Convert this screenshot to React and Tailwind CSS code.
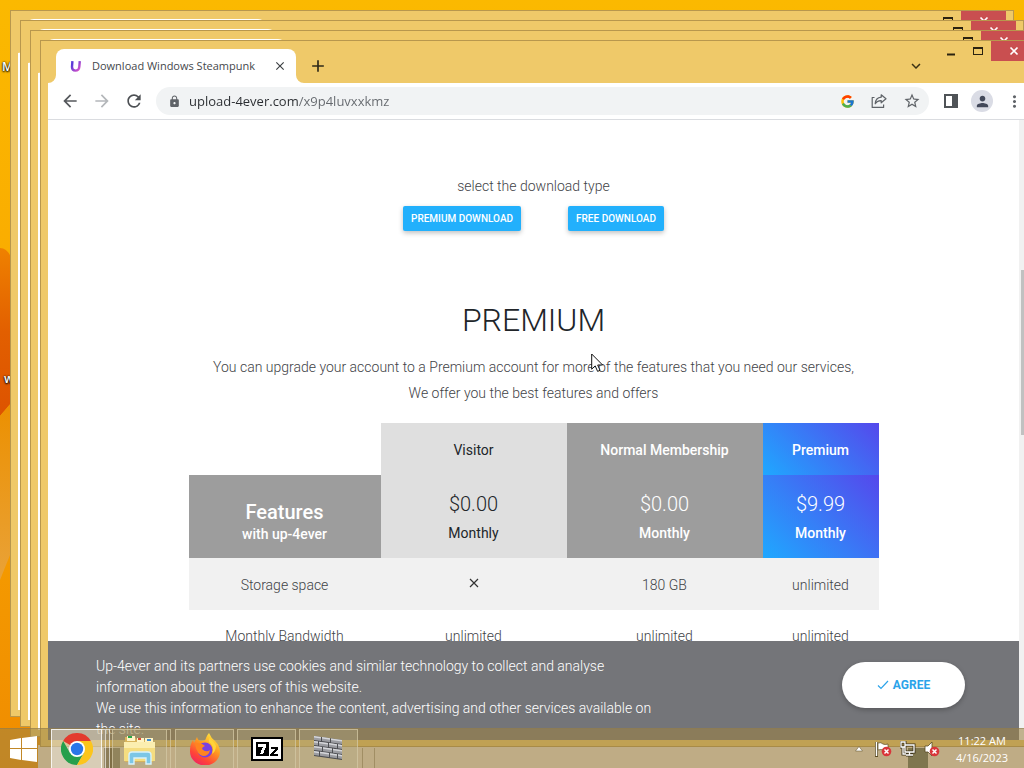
import React from "react";
import { MdArrowBack, MdArrowForward, MdRefresh, MdLock, MdStarBorder, MdPerson, MdClose, MdAdd, MdExpandMore, MdMoreVert } from "react-icons/md";
import { FcGoogle } from "react-icons/fc";

const plans = [
  { name: "Visitor", price: "$0.00", style: "bg-[#dfdfdf] text-[#212529]", weight: "font-normal" },
  { name: "Normal Membership", price: "$0.00", style: "bg-[#9d9d9d] text-white", weight: "font-medium" },
  { name: "Premium", price: "$9.99", style: "bg-linear-[45deg] from-[#1fa8ff] to-[#5548ec] text-white", weight: "font-medium" },
];

function Wallpaper() {
  return (
    <svg className="absolute inset-0 h-full w-full" viewBox="0 0 1024 768" preserveAspectRatio="none" aria-hidden="true">
      <defs>
        <linearGradient id="sky" x1="0" y1="0" x2="0" y2="1">
          <stop offset="0" stopColor="#fbb900" />
          <stop offset="0.33" stopColor="#faad00" />
          <stop offset="1" stopColor="#f08c00" />
        </linearGradient>
        <linearGradient id="petal" x1="0" y1="0" x2="0" y2="1">
          <stop offset="0" stopColor="#ef8100" />
          <stop offset="0.5" stopColor="#e25f00" />
          <stop offset="1" stopColor="#dd5300" />
        </linearGradient>
        <linearGradient id="fold" x1="0" y1="0" x2="0" y2="1">
          <stop offset="0" stopColor="#ec9000" />
          <stop offset="1" stopColor="#e9a238" />
        </linearGradient>
      </defs>
      <rect width="1024" height="768" fill="url(#sky)" />
      <path d="M0 248Q8 248 12 260V402L0 416Z" fill="url(#petal)" />
      <path d="M0 416L12 402V550L0 580Z" fill="url(#fold)" />
      <rect x="38" y="745" width="986" height="23" fill="#ede4dc" />
      <rect x="908" y="748" width="20" height="20" fill="#59665f" />
      <rect x="104" y="748" width="16" height="20" fill="#59564a" />
    </svg>
  );
}

function UploadLogo() {
  return (
    <svg width="16" height="16" viewBox="0 0 16 16" className="shrink-0" aria-hidden="true">
      <defs>
        <linearGradient id="logo" x1="0" y1="0" x2="1" y2="1">
          <stop offset="0.2" stopColor="#5a3bd8" />
          <stop offset="1" stopColor="#e054c8" />
        </linearGradient>
      </defs>
      <path d="M4.4 3.2L4 9Q4 12.6 7.4 12.6Q11 12.6 11.3 9L11.8 3.2" fill="none" stroke="url(#logo)" strokeWidth="2.4" />
    </svg>
  );
}

function ShareIcon() {
  return (
    <svg width="16" height="16" viewBox="0 0 16 16" fill="none" stroke="#5f6368" strokeWidth="1.2" strokeLinejoin="round" aria-hidden="true">
      <path d="M3.5 4.5H1.2V14.4H12.6V11.5" />
      <path d="M10.2 1.8L15 5.8L10.2 9.8V7.6Q6.2 7.4 4.2 10.8Q4.6 4.8 10.2 4.2Z" />
    </svg>
  );
}

function Caption({ front }) {
  return (
    <div className="flex shrink-0 self-start" aria-hidden={!front}>
      <button type="button" tabIndex={front ? 0 : -1} aria-label="Minimize" className="flex h-5 w-7 items-center justify-center">
        <svg width="12" height="12"><path d="M2 8.5H10V10.5H2Z" fill="#2b2310" /></svg>
      </button>
      <button type="button" tabIndex={front ? 0 : -1} aria-label="Maximize" className="flex h-5 w-[26px] items-center justify-center">
        <svg width="12" height="12"><path d="M1 2H11V10H1ZM2 4V9H10V4Z" fill="#2b2310" fillRule="evenodd" /></svg>
      </button>
      <button type="button" tabIndex={front ? 0 : -1} aria-label="Close window" className="flex h-5 w-[45px] items-center justify-center bg-[#c94f50]">
        <svg width="10" height="10"><path d="M1.5 1.5L8.5 8.5M8.5 1.5L1.5 8.5" stroke="#fff" strokeWidth="1.7" /></svg>
      </button>
    </div>
  );
}

function BrowserWindow({ place, front = false, children }) {
  return (
    <div className={`absolute flex flex-col border border-[#b8974d] bg-[#efc969] px-[7px] pb-1.5 ${place}`}>
      <div className="flex h-[42px] shrink-0">
        <div className="relative mt-2 ml-2 flex w-60 items-center rounded-t-lg bg-white pr-2 pl-3">
          <svg width="8" height="8" className="absolute bottom-0 -left-2" aria-hidden="true"><path d="M8 0V8H0A8 8 0 0 0 8 0Z" fill="#fff" /></svg>
          <svg width="8" height="8" className="absolute -right-2 bottom-0" aria-hidden="true"><path d="M0 0V8H8A8 8 0 0 1 0 0Z" fill="#fff" /></svg>
          {front && (
            <>
              <UploadLogo />
              <span className="ml-2 min-w-0 flex-1 text-[11px] whitespace-nowrap text-[#45484c]">Download Windows Steampunk</span>
              <button type="button" aria-label="Close tab" className="ml-1 flex h-4 w-4 items-center justify-center text-[#3c4043]"><MdClose size={14} /></button>
            </>
          )}
        </div>
        {front && (
          <button type="button" aria-label="New tab" className="ml-3 self-center pt-2 text-[#2f2a18]"><MdAdd size={20} /></button>
        )}
        <div className="flex-1" />
        {front && (
          <button type="button" aria-label="Search tabs" className="mr-3 self-center pt-2 text-[#3b3215]"><MdExpandMore size={18} /></button>
        )}
        <Caption front={front} />
      </div>
      <div className="flex min-h-0 flex-1 flex-col bg-white">{children}</div>
    </div>
  );
}

function Toolbar() {
  return (
    <div className="flex h-[37px] shrink-0 items-center border-b border-[#dadce0] pl-3 text-[#5f6368]">
      <button type="button" aria-label="Back" className="text-[#55585c]"><MdArrowBack size={20} /></button>
      <button type="button" aria-label="Forward" className="ml-3 text-[#b4b7ba]"><MdArrowForward size={20} /></button>
      <button type="button" aria-label="Reload" className="ml-3 text-[#4d5054]"><MdRefresh size={20} /></button>
      <div className="ml-3 flex h-7 flex-1 items-center gap-4 rounded-full bg-[#f1f3f4] pr-2 pl-3">
        <MdLock size={13} className="-mr-2 shrink-0" />
        <label htmlFor="address" className="sr-only">Address</label>
        <input
          id="address"
          defaultValue="upload-4ever.com/x9p4luvxxkmz"
          className="h-6 min-w-0 flex-1 bg-linear-to-r from-[#2a2d31] from-[110px] to-[#64686d] to-[110px] bg-clip-text text-[13px] text-transparent caret-black outline-none"
        />
        <FcGoogle size={15} className="shrink-0" />
        <button type="button" aria-label="Share"><ShareIcon /></button>
        <button type="button" aria-label="Bookmark"><MdStarBorder size={18} /></button>
      </div>
      <button type="button" aria-label="Side panel" className="ml-3.5">
        <svg width="16" height="14"><path d="M1 0H15V14H1ZM3 2V12H9V2Z" fill="#4f5357" fillRule="evenodd" /></svg>
      </button>
      <button type="button" aria-label="Profile" className="ml-3 flex h-[22px] w-[22px] items-center justify-center rounded-full bg-[#dadce5] text-[#43495a]"><MdPerson size={17} /></button>
      <button type="button" aria-label="Menu" className="mr-3 ml-3"><MdMoreVert size={19} /></button>
    </div>
  );
}

function PricingTable() {
  return (
    <table className="mx-auto mt-[17px] w-full max-w-[690px] table-fixed border-collapse text-center text-sm">
      <colgroup>
        <col className="w-[192px]" /><col className="w-[186px]" /><col className="w-[196px]" /><col className="w-[116px]" />
      </colgroup>
      <thead>
        <tr className="h-[52px]">
          <td />
          {plans.map((p) => (
            <th key={p.name} scope="col" className={`pt-0.5 ${p.style} ${p.weight}`}>{p.name}</th>
          ))}
        </tr>
        <tr className="h-[83px]">
          <th scope="col" className="bg-[#9d9d9d] pt-2.5 font-medium text-white">
            <div className="text-xl leading-6">Features</div>
            <div className="leading-5">with up-4ever</div>
          </th>
          {plans.map((p) => (
            <td key={p.name} className={`pt-px ${p.style}`}>
              <div className="text-xl leading-7 font-light">{p.price}</div>
              <div className={`mt-[3px] leading-6 ${p.weight}`}>Monthly</div>
            </td>
          ))}
        </tr>
      </thead>
      <tbody className="font-light text-[#3f4347]">
        <tr className="h-[52px] bg-[#f1f1f1]">
          <td className="pt-0.5">Storage space</td>
          <td className="pb-0.5">
            <svg width="10" height="10" className="mx-auto" role="img" aria-label="Not included"><path d="M1 1L9 9M9 1L1 9" stroke="#333" strokeWidth="1.2" /></svg>
          </td>
          <td className="pt-0.5">180 GB</td>
          <td className="pt-0.5">unlimited</td>
        </tr>
        <tr className="h-[52px]">
          <td>Monthly Bandwidth</td><td>unlimited</td><td>unlimited</td><td>unlimited</td>
        </tr>
      </tbody>
    </table>
  );
}

function Page() {
  const action = "h-[25px] rounded-xs bg-[#22b0fc] px-2 text-[10px] font-medium text-white shadow-[0_2px_5px_rgba(0,0,0,0.25)]";
  return (
    <div className="flex min-h-0 flex-1">
      <main className="relative min-w-0 flex-1 overflow-hidden pt-[53px] text-center font-['Roboto',sans-serif]">
        <p className="text-sm leading-[26px] font-light text-[#3f4347]">select the download type</p>
        <div className="mt-[7px] flex justify-center gap-[47px]">
          <button type="button" className={action}>PREMIUM DOWNLOAD</button>
          <button type="button" className={action}>FREE DOWNLOAD</button>
        </div>
        <h1 className="mt-[69px] text-[32px] leading-10 font-light text-[#212529]">PREMIUM</h1>
        <p className="mt-3.5 text-sm leading-[26px] font-light text-[#3f4347]">
          You can upgrade your account to a Premium account for more of the features that you need our services,<br />
          We offer you the best features and offers
        </p>
        <PricingTable />
        <section aria-label="Cookies" className="absolute inset-x-0 bottom-0 flex items-start justify-between bg-[#747579] pt-[15px] pr-[54px] pl-12 text-left text-sm leading-[21px] text-white">
          <p className="max-w-[566px] font-light">
            Up-4ever and its partners use cookies and similar technology to collect and analyse<br />
            information about the users of this website.<br />
            We use this information to enhance the content, advertising and other services available on<br />
            the site.
          </p>
          <button type="button" className="mt-1.5 flex h-[46px] w-[123px] items-center justify-center gap-1 rounded-full bg-white text-xs font-bold text-[#2ba3ea] shadow-[0_2px_5px_rgba(0,0,0,0.25)]">
            <svg width="12" height="10" aria-hidden="true"><path d="M1 5.5L4 8.5L11 1" fill="none" stroke="#2ba3ea" strokeWidth="1.2" /></svg>
            AGREE
          </button>
        </section>
      </main>
      <div className="w-[17px] shrink-0 bg-[#f1f1f1] pt-[150px]">
        <div className="mx-0.5 h-[165px] bg-[#c1c1c1]" />
      </div>
    </div>
  );
}

function ChromeIcon() {
  return (
    <svg width="32" height="32" viewBox="0 0 32 32" aria-hidden="true">
      <path d="M16 16L2.14 8A16 16 0 0 1 29.86 8H16Z" fill="#e33b2e" />
      <path d="M2.14 8A16 16 0 0 0 16 32L22.93 20L16 16L9.07 20Z" fill="#269f4c" />
      <path d="M29.86 8A16 16 0 0 1 16 32L22.93 20L16 8Z" fill="#fcc51c" />
      <circle cx="16" cy="16" r="8" fill="#fff" />
      <circle cx="16" cy="16" r="6.2" fill="#2a76e8" />
    </svg>
  );
}

function ExplorerIcon() {
  return (
    <svg width="34" height="32" viewBox="0 0 34 32" aria-hidden="true">
      <path d="M2 4H12L14 7H30V29H2Z" fill="#d8b45c" />
      <path d="M4 3H12V8H4Z" fill="#fff4c4" /><path d="M5 3H9V5H5Z" fill="#27a64a" />
      <path d="M14 5H21V9H14Z" fill="#fff4c4" /><path d="M15 5H18V7H15Z" fill="#d94a35" />
      <path d="M22 5H30V9H22Z" fill="#fff4c4" /><path d="M24 6H28V8H24Z" fill="#3c8dd4" />
      <path d="M1 9H32V28H1Z" fill="#f5dd80" /><path d="M1 9H32V15H1Z" fill="#fbeeb0" />
      <path d="M6 31V22Q6 19 9 19H25Q28 19 28 22V31H23V25H11V31Z" fill="#7cc6e6" stroke="#d8f2fb" strokeWidth="1.4" />
    </svg>
  );
}

function FirefoxIcon() {
  return (
    <svg width="32" height="32" viewBox="0 0 32 32" aria-hidden="true">
      <defs>
        <linearGradient id="fire" x1="0.8" y1="0" x2="0.2" y2="1">
          <stop offset="0" stopColor="#fff044" /><stop offset="0.4" stopColor="#ff9a20" /><stop offset="0.75" stopColor="#ff4438" /><stop offset="1" stopColor="#ed2268" />
        </linearGradient>
      </defs>
      <path d="M20 0Q22 5 26 8Q31 13 31 19A15 14 0 0 1 1 18Q1 11 4 7L5 10L8 4Q9 8 12 8Q17 8 17 5Q18 2 20 0Z" fill="url(#fire)" />
      <circle cx="16" cy="17" r="7.5" fill="#7942e0" />
      <path d="M6 11Q12 9 16 13Q13 14 13 16Q17 20 21 17Q20 23 14 23Q8 22 6 11Z" fill="#ff8420" />
      <path d="M20 9Q26 13 23 21Q27 18 27 13Q25 8 20 5Z" fill="#ffd43a" />
    </svg>
  );
}

function SevenZipIcon() {
  return (
    <svg width="32" height="24" viewBox="0 0 32 24" shapeRendering="crispEdges" aria-hidden="true">
      <rect width="32" height="24" fill="#000" /><rect x="2" y="2" width="28" height="20" fill="#fff" />
      <rect x="5" y="5" width="13" height="14" fill="#000" />
      <path d="M7 7H15V10L12 17H9L12 10H7Z" fill="#fff" />
      <path d="M20 10H27V12L22 17H27V19H19V17L24 12H20Z" fill="#000" />
    </svg>
  );
}

function WallIcon() {
  const bricks = [[0, 0, 7], [8, 0, 8], [17, 0, 11], [0, 5, 4], [5, 5, 9], [15, 5, 8], [24, 5, 4], [0, 10, 8], [9, 10, 9], [19, 10, 9], [0, 15, 5], [6, 15, 9], [16, 15, 7], [24, 15, 4]];
  return (
    <svg width="30" height="26" viewBox="0 0 30 26" aria-hidden="true">
      <g transform="skewY(8)">
        <rect width="28" height="20" fill="#4c4d51" />
        {bricks.map(([x, y, w]) => (
          <g key={`${x}-${y}`}><rect x={x} y={y} width={w} height="4" fill="#9b9ca1" /><rect x={x} y={y} width={w} height="1.5" fill="#d5d6da" /></g>
        ))}
      </g>
    </svg>
  );
}

function Blocked({ x }) {
  return (
    <g>
      <circle cx={x} cy="10.5" r="4.8" fill="#d9363a" />
      <path d={`M${x - 2} 8.5L${x + 2} 12.5M${x + 2} 8.5L${x - 2} 12.5`} stroke="#fff" strokeWidth="1.5" />
    </g>
  );
}

function Taskbar() {
  const item = "flex h-10 items-center justify-center border border-[#d6cba6]/70 bg-[#b5ab88]/35";
  return (
    <footer className="absolute inset-x-0 bottom-0 flex h-10 items-center border-t border-[#8d7a4e]/50 bg-[rgba(156,131,66,0.57)] font-['Open_Sans',sans-serif] text-white">
      <button type="button" aria-label="Start" className="flex w-[51px] items-center pl-2.5">
        <svg width="28" height="26" viewBox="0 0 28 26"><path d="M0 4L11 2V12H0ZM12 2L27 0V12H12ZM0 13H11V24L0 22ZM12 13H27V26L12 24Z" fill="#fff" /></svg>
      </button>
      <div className="flex">
        <button type="button" aria-label="Chrome" className="flex h-10 w-[51px] items-center justify-center border border-white/80 bg-white/40"><ChromeIcon /></button>
        <div className="h-10 w-1 border-y border-r border-white/60 bg-white/20" />
        <div className="h-10 w-1 border-y border-r border-white/60 bg-white/10" />
      </div>
      <button type="button" aria-label="File Explorer" className={`ml-0.5 w-[55px] ${item}`}><ExplorerIcon /></button>
      <div className="h-10 w-1 border-y border-r border-[#d6cba6]/70" />
      <button type="button" aria-label="Firefox" className={`ml-1 w-[59px] ${item}`}><FirefoxIcon /></button>
      <button type="button" aria-label="7-Zip" className={`ml-[3px] w-[59px] ${item}`}><SevenZipIcon /></button>
      <button type="button" aria-label="Firewall" className={`ml-[3px] w-[59px] ${item}`}><WallIcon /></button>
      <div className="ml-1 h-5 w-[13px] self-end border-x border-[#8d7a4e]/60" />
      <div className="flex-1" />
      <button type="button" aria-label="Show hidden icons" className="mr-3"><svg width="8" height="6"><path d="M4 0.5L7.5 5H0.5Z" fill="#fff" stroke="#5b4c24" strokeWidth="0.5" /></svg></button>
      <button type="button" aria-label="Action Center" className="mr-2">
        <svg width="17" height="16"><path d="M1.5 1V16" stroke="#5b4c24" strokeWidth="3" /><path d="M1.5 1V15" stroke="#fff" strokeWidth="1.5" /><path d="M3 2Q6 1 8 3Q10 4 13 3V10Q10 11 8 9Q6 8 3 9Z" fill="#fff" stroke="#5b4c24" strokeWidth="0.7" /><Blocked x={11.5} /></svg>
      </button>
      <button type="button" aria-label="Network" className="mr-2">
        <svg width="16" height="16" fill="none"><path d="M5 4H14V11H5ZM9.5 11V14M6 14H13M1 1H5V6H1ZM3 6V13H6" stroke="#3e351c" strokeWidth="3" /><path d="M5 4H14V11H5ZM9.5 11V14M6 14H13M1 1H5V6H1ZM3 6V13H6" stroke="#fff" strokeWidth="1.3" /></svg>
      </button>
      <button type="button" aria-label="Volume" className="mr-4">
        <svg width="16" height="16"><path d="M1 5H4L8 1V15L4 11H1Z" fill="#fff" stroke="#5b4c24" strokeWidth="0.8" /><Blocked x={10.5} /></svg>
      </button>
      <div className="mr-4 text-center text-[11px] leading-[17px]">
        <div>11:22 AM</div>
        <div>4/16/2023</div>
      </div>
    </footer>
  );
}

export default function App() {
  return (
    <div className="relative h-screen overflow-hidden bg-[#fbb900] font-['Open_Sans',sans-serif]">
      <Wallpaper />
      <span className="absolute top-[59px] left-0.5 text-xs leading-4 font-semibold text-white [text-shadow:0_1px_2px_#000,0_0_2px_#000]">M</span>
      <span className="absolute top-[371px] left-1 text-xs leading-4 font-semibold text-white [text-shadow:0_1px_2px_#000,0_0_2px_#000]">w</span>
      <BrowserWindow place="left-2.5 top-2.5 right-2.5 bottom-[51px]" />
      <BrowserWindow place="left-5 top-5 right-0 bottom-[41px]" />
      <BrowserWindow place="left-[30px] top-[30px] -right-2.5 bottom-[31px]" />
      <BrowserWindow place="left-10 top-10 -right-5 bottom-[21px]" front>
        <Toolbar />
        <Page />
      </BrowserWindow>
      <Taskbar />
      <svg className="pointer-events-none absolute top-[353px] left-[591px]" width="13" height="20" viewBox="0 0 13 20" aria-hidden="true">
        <path d="M0.7 1V16.2L4.2 12.9L6.6 18.4L9 17.3L6.7 12H11.6Z" fill="#fff" stroke="#111" />
      </svg>
    </div>
  );
}
